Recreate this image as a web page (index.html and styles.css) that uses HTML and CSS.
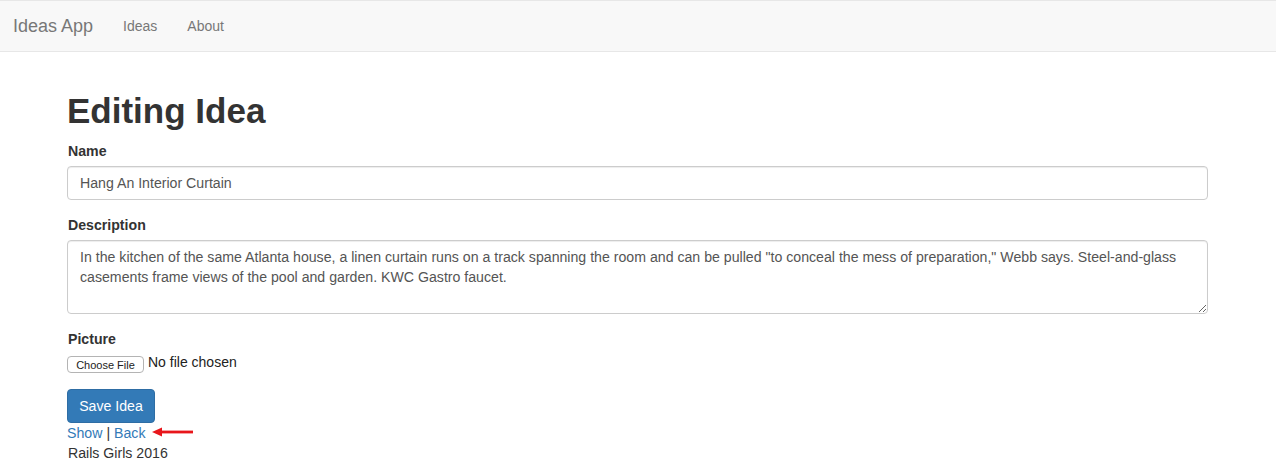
FILE: index.html
```html
<!DOCTYPE html>
<html lang="en">
<head>
<meta charset="utf-8">
<title>Ideas App</title>
<link rel="stylesheet" href="styles.css">
</head>
<body>
<nav class="navbar">
  <div class="navbar-inner">
    <a class="brand" href="#">Ideas App</a>
    <ul class="nav">
      <li><a href="#">Ideas</a></li>
      <li><a href="#">About</a></li>
    </ul>
  </div>
</nav>
<main class="container">
  <h1 class="title">Editing Idea</h1>
  <form class="form">
    <div class="form-group">
      <label class="label">Name</label>
      <input class="form-control" type="text" value="Hang An Interior Curtain">
    </div>
    <div class="form-group">
      <label class="label">Description</label>
      <textarea class="form-control textarea" rows="3">In the kitchen of the same Atlanta house, a linen curtain runs on a track spanning the room and can be pulled "to conceal the mess of preparation," Webb says. Steel-and-glass casements frame views of the pool and garden. KWC Gastro faucet.</textarea>
    </div>
    <div class="form-group">
      <label class="label">Picture</label>
      <div class="file-input">
        <button type="button" class="file-btn">Choose File</button>
        <span class="file-name">No file chosen</span>
      </div>
    </div>
    <button type="button" class="btn-primary">Save Idea</button>
  </form>
  <div class="links">
    <a href="#">Show</a> | <a href="#">Back</a>
    <svg class="arrow" width="44" height="10" viewBox="0 0 44 10" aria-hidden="true">
      <polygon points="1,5 11,0.5 11,9.5" fill="#e8161b"/>
      <rect x="9" y="3.6" width="33" height="2.8" fill="#e8161b"/>
    </svg>
  </div>
  <p class="footer">Rails Girls 2016</p>
</main>
</body>
</html>
```
FILE: styles.css
```css
* { box-sizing: border-box; }
html, body { margin: 0; padding: 0; }
body {
  font-family: "Liberation Sans", Arial, Helvetica, sans-serif;
  font-size: 14px;
  line-height: 20px;
  color: #333;
  background: #fff;
}
a { color: #337ab7; text-decoration: none; }

.navbar {
  background: #f8f8f8;
  border-top: 1px solid #e7e7e7;
  border-bottom: 1px solid #e7e7e7;
  margin-bottom: 20px;
  min-height: 52px;
}
.navbar-inner {
  display: flex;
  align-items: center;
  padding: 0 15px;
  height: 50px;
}
.brand {
  color: #777;
  font-size: 18px;
  line-height: 20px;
  padding: 15px 15px 15px 0;
  margin-left: -2px;
}
.nav {
  display: flex;
  list-style: none;
  margin: 0;
  padding: 0;
}
.nav a {
  display: block;
  color: #777;
  padding: 15px;
  line-height: 20px;
}

.container {
  display: flow-root;
  width: 1170px;
  margin: 0 auto;
  padding: 0 15px;
  font-size: 14.15px;
}
.title {
  font-size: 35px;
  font-weight: bold;
  line-height: 1.1;
  margin: 20px 0 10px -1px;
  color: #333;
}
.form-group { margin-bottom: 15px; }
.label {
  display: block;
  font-weight: bold;
  margin-bottom: 5px;
  max-width: 100%;
}
.form-control {
  display: block;
  height: 34px;
  padding: 6px 12px;
  font-family: inherit;
  font-size: 14.15px;
  line-height: 20px;
  color: #555;
  background: #fff;
  border: 1px solid #ccc;
  border-radius: 4px;
  box-shadow: inset 0 1px 1px rgba(0,0,0,.075);
  margin-left: -1px;
  width: calc(100% + 1px);
}
.textarea {
  height: 74px;
  resize: vertical;
}
.file-input {
  display: flex;
  align-items: center;
  height: 20px;
  margin-left: -1px;
}
.file-btn {
  font-family: "Liberation Sans", Arial, sans-serif;
  font-size: 11px;
  line-height: 13px;
  height: 17px;
  padding: 1px 0 0;
  color: #222;
  background: #fff;
  border: 1px solid #b4b4b4;
  border-radius: 4px;
  margin: 2px 4px 0 0;
  width: 77px;
}
.file-name {
  font-size: 14px;
  color: #222;
  margin-top: -4px;
}
.btn-primary {
  display: block;
  font-family: inherit;
  font-size: 14.15px;
  line-height: 20px;
  padding: 6px 0;
  white-space: nowrap;
  color: #fff;
  background: #337ab7;
  border: 1px solid #2e6da4;
  border-radius: 4px;
  margin-left: -1px;
  width: 88px;
  height: 34px;
}
.links {
  display: flex;
  align-items: center;
  gap: 4px;
  line-height: 20px;
  margin-left: -1px;
}
.arrow { margin-left: 1px; margin-top: -2px; }
.footer { margin: 0; }
```
